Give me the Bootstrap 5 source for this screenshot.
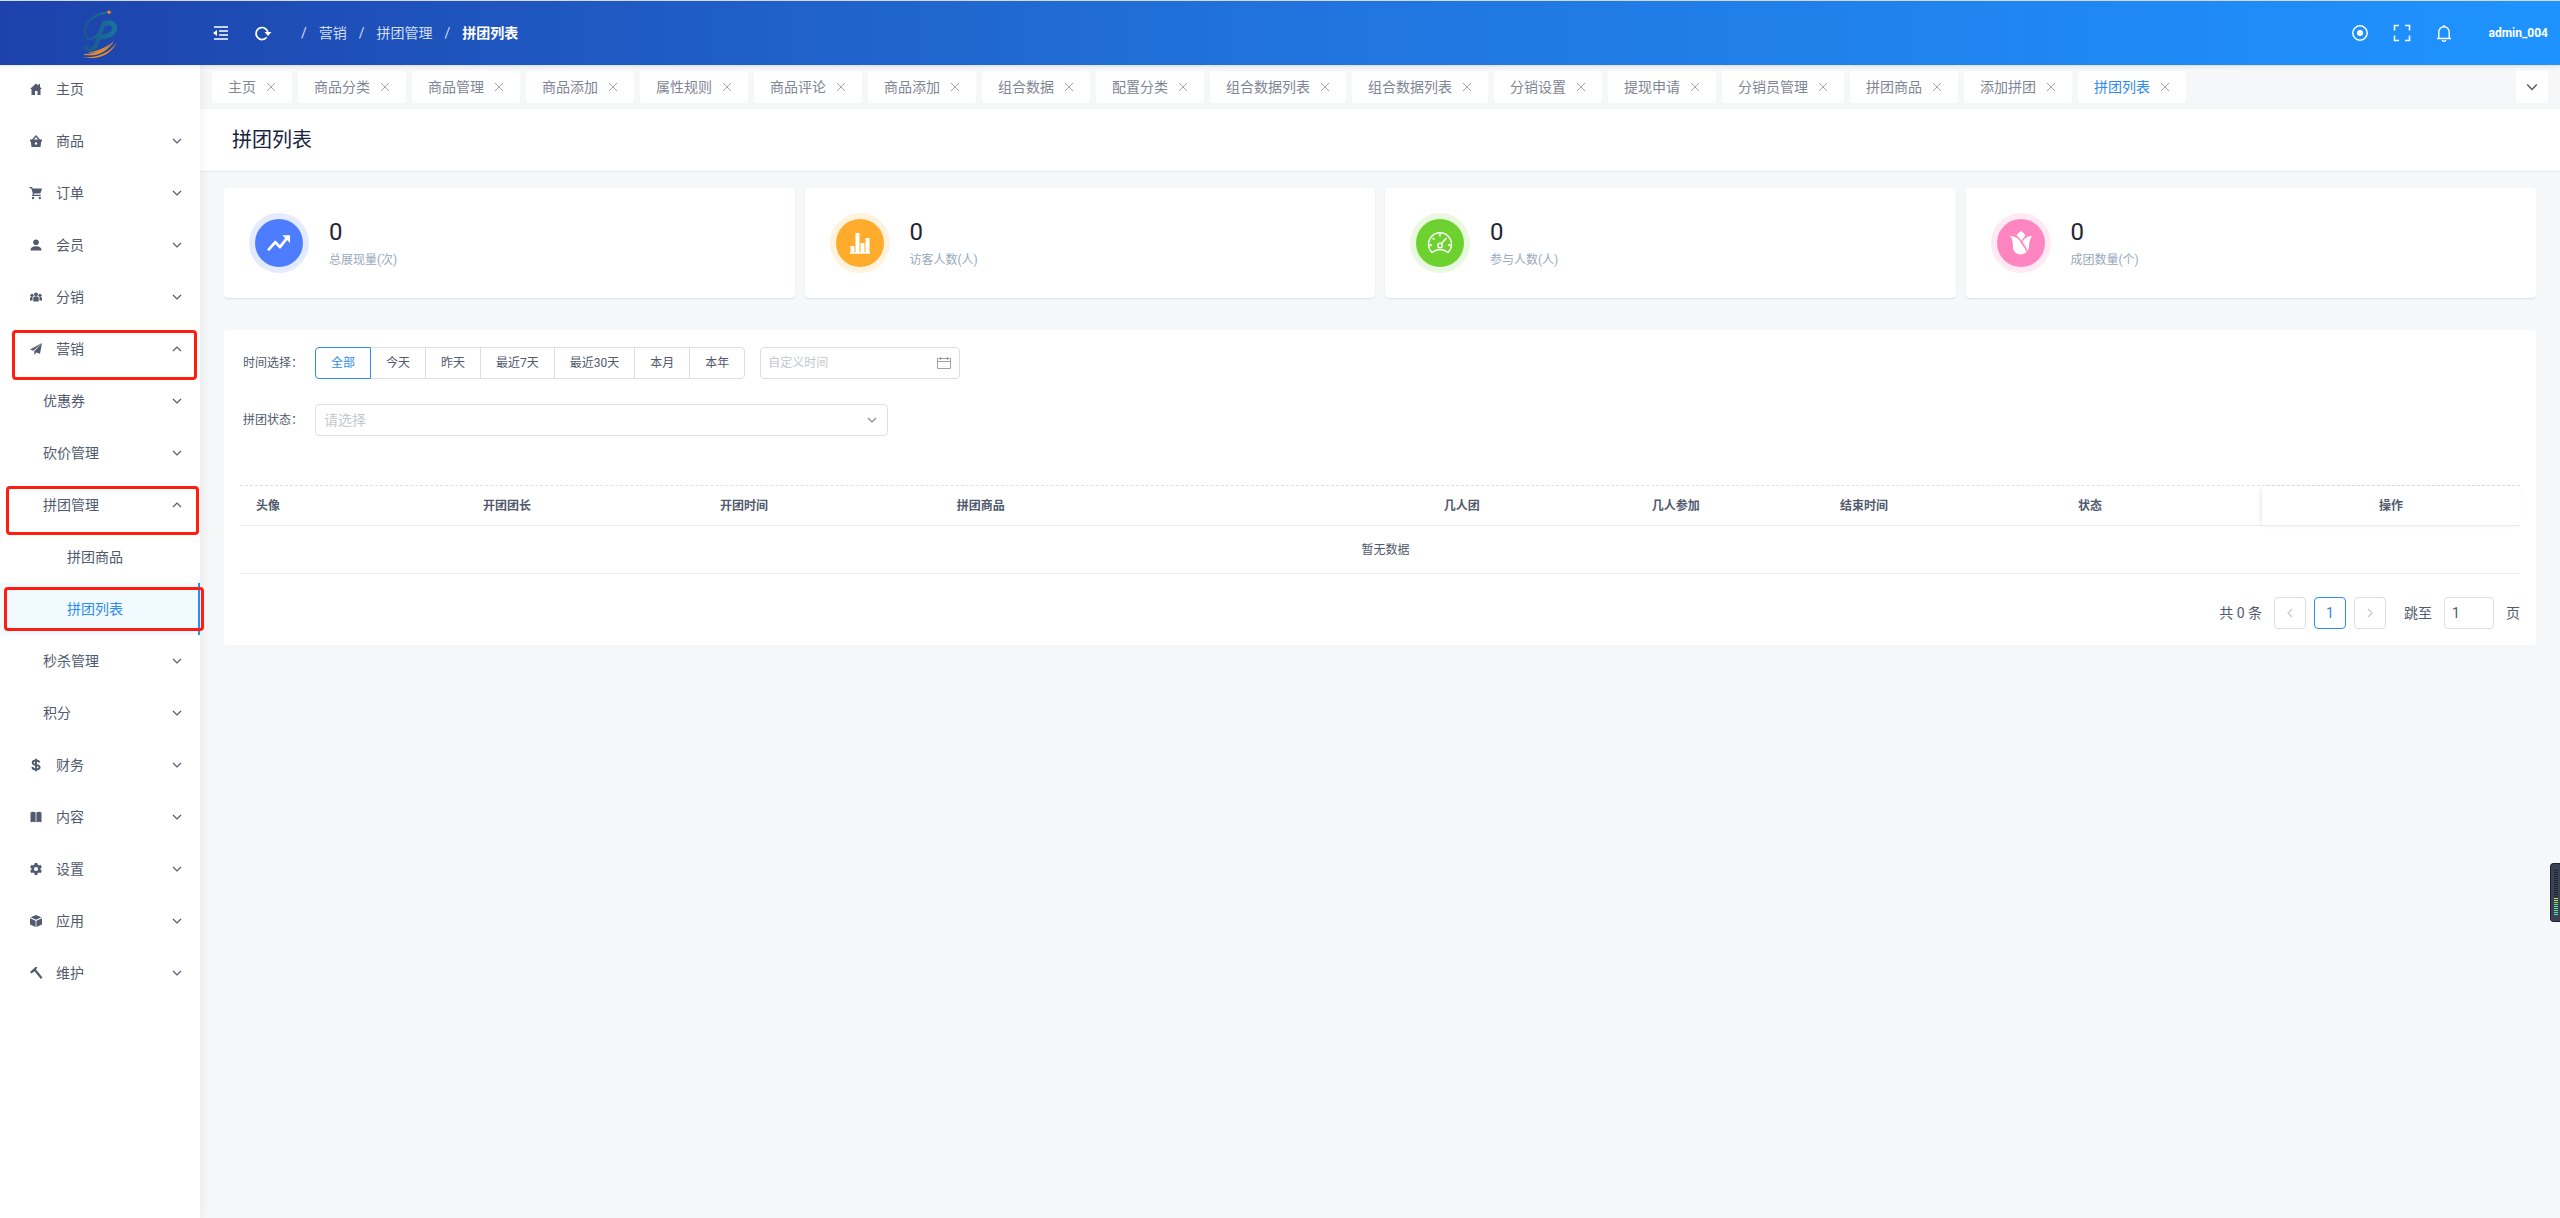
<!DOCTYPE html>
<html lang="zh-CN">
<head>
<meta charset="utf-8">
<meta name="viewport" content="width=device-width, initial-scale=1">
<title>拼团列表</title>
<link href="https://cdn.jsdelivr.net/npm/bootstrap@5.3.0/dist/css/bootstrap.min.css" rel="stylesheet">
<script src="https://cdn.jsdelivr.net/npm/bootstrap@5.3.0/dist/js/bootstrap.bundle.min.js" defer></script>
<style>
:root{--ink:#515a6e;--line:#dcdee2;--soft:#e8eaec;--blue:#2d8cf0}
body{font-family:Roboto,"Noto Sans CJK SC",sans-serif;font-size:14px;line-height:20px;color:var(--ink);background:#f5f7f9;min-height:100vh}
a{color:inherit;text-decoration:none}
svg{display:block;flex:none}
.topbar{height:65px;border-top:1px solid #d5d9de;background:linear-gradient(90deg,#1d42ab,#2173dc,#1e93ff);color:#fff;z-index:3;box-shadow:0 1px 4px rgba(0,21,41,.12);position:relative}
.brand{width:200px}
.icon-btn{background:none;border:0;padding:0;color:inherit;display:flex}
.crumbs{gap:12px;margin-left:29px}
.crumbs a,.crumbs span{color:#d3def3}
.crumbs .now{color:#fff;font-weight:700}
.tools{gap:24px;padding-right:12px}
.account{font-size:12px;font-weight:700;margin-left:12px}
.side{width:200px;flex:none;background:#fff;box-shadow:2px 0 8px rgba(29,35,41,.06);z-index:2}
.side ul{margin:0;padding:0;list-style:none}
.side .top-list{margin-top:-2px}
.item{display:flex;align-items:center;height:52px;padding:0 18px 0 28px;gap:12px;position:relative}
.item .chev{margin-left:auto}
.item.lvl2{padding-left:43px}
.item.lvl3{padding-left:67px}
.item.on{background:#f0faff;color:var(--blue);border-right:2px solid var(--blue)}
.frame{position:absolute;border:3px solid #ff1d10;border-radius:4px;z-index:4;pointer-events:none;inset:7px 3px -5px 12px}
.frame.wide{inset:7px 1px -4px 6px}
.frame.over{inset:4px -6px 4px 4px}
.main-col{min-width:0}
.tabs{padding:6px 12px;gap:6px}
.tab{height:32px;background:#fff;border-radius:3px;padding:0 16px;gap:10px;color:#808695;white-space:nowrap}
.tab.on{color:var(--blue)}
.tab .icon-btn{color:#a3a6ad}
.more{width:32px;height:32px;background:#fff;border-radius:2px;color:var(--ink)}
.page-head{background:#fff;border-bottom:1px solid var(--soft);height:63px;padding:0 32px}
.page-head h1{font-size:20px;line-height:28px;font-weight:400;color:#17233d;margin:0}
.body-pad{padding:16px 24px}
.stats{gap:10px}
.panel{background:#fff;border-radius:4px}
.stat{height:110px;box-shadow:0 1px 1px #dcdfe3;padding:0 25px;gap:20px}
.disc{width:60px;height:60px;border-radius:50%;padding:6px}
.disc div{width:48px;height:48px;border-radius:50%;color:#fff}
.disc.b{background:#e4ebff}.disc.b div{background:#4d7cfe}
.disc.o{background:#fff2df}.disc.o div{background:#ffab2b}
.disc.g{background:#e9f9e0}.disc.g div{background:#6dd230}
.disc.p{background:#ffeaf4}.disc.p div{background:#ff85c0}
.figure-num{font-size:24px;line-height:32px;color:#252631}
.figure-cap{font-size:12px;line-height:20px;color:#98a9bc;margin-top:2px}
.list{margin-top:32px;padding:17px 16px 16px;font-size:12px}
.lab{width:75px;padding-left:3px}
.seg input{position:absolute;opacity:0}
.seg label{height:32px;line-height:30px;padding:0 15px;border:1px solid var(--line);margin-left:-1px;cursor:pointer;position:relative}
.seg label:first-of-type{margin-left:0;border-radius:4px 0 0 4px}
.seg label:last-of-type{border-radius:0 4px 4px 0}
.seg input:checked+label{border-color:var(--blue);color:var(--blue);z-index:1}
.field{height:32px;border:1px solid var(--line);border-radius:4px;background:#fff;color:var(--ink);padding:0 7px}
.field::placeholder{color:#c5c8ce;opacity:1}
.date-box{width:200px;margin-left:15px}
.date-box input{width:100%}
.date-box svg{position:absolute;right:9px;top:9px;color:#9a9fab}
.state-row{margin-top:25px}
.state{width:573px;max-width:100%}
.state select{width:100%;appearance:none;color:#c5c8ce;font-size:14px;padding:0 8px}
.state svg{position:absolute;right:11px;top:11px;color:#808695}
.grid{table-layout:fixed;width:100%;margin-top:49px;border-top:1px dashed #dfe1e4;border-collapse:separate;border-spacing:0}
.grid th{height:40px;padding:0 16px;font-weight:700;border-bottom:1px solid var(--soft)}
.grid .fixed{text-align:center;box-shadow:-2px 0 6px -2px rgba(0,0,0,.14)}
.grid td{height:48px;text-align:center;padding-left:12px;border-bottom:1px solid var(--soft)}
.pager{margin-top:23px;font-size:14px;gap:8px}
.pg{width:32px;height:32px;border:1px solid var(--line);border-radius:4px;background:#fff;color:#c5c8ce;padding:0}
.pg.on{border-color:var(--blue);color:var(--blue)}
.pager label{margin-left:10px}
.jump{width:50px}
.meter{position:fixed;right:0;top:863px;width:10px;height:59px;background:#3c4254;border:1px solid #1c202c;border-right:0;border-radius:4px 0 0 4px;z-index:5;padding:6px 2px 6px 3px}
.meter div{height:100%;background:repeating-linear-gradient(#0000 0 1px,#3c4254 1px 2px),linear-gradient(#1f2430 0 62%,#b4e04c 62%,#62e08a 78%,#4fe3c4)}
</style>
</head>
<body class="d-flex flex-column">
<svg width="0" height="0" class="position-absolute" aria-hidden="true">
<symbol id="down" viewBox="0 0 10 10"><path d="M1 3l4 4 4-4" fill="none" stroke="currentColor" stroke-width="1.2"/></symbol>
<symbol id="up" viewBox="0 0 10 10"><path d="M1 7l4-4 4 4" fill="none" stroke="currentColor" stroke-width="1.2"/></symbol>
<symbol id="x" viewBox="0 0 10 10"><path d="M1 1l8 8M9 1l-8 8" fill="none" stroke="currentColor" stroke-width="1"/></symbol>
</svg>

<header class="topbar d-flex align-items-center">
<a href="#" class="brand d-flex justify-content-center" aria-label="首页">
<svg width="36" height="54" viewBox="0 0 36 54"><defs><linearGradient id="lg" x1="0" x2="36" y1="0" y2="0" gradientUnits="userSpaceOnUse"><stop offset="0" stop-color="#1b5590"/><stop offset="1" stop-color="#19769a"/></linearGradient></defs>
<g fill="none" stroke="url(#lg)" stroke-linecap="round"><path d="M23 7C11 9 2 17 3 26c1 8 6 8 10 5 3-2 5-5 8-8" stroke-width="2.600"/><path d="M22 17c-4 8-5 15-8 22-2 5-8 6-11 2" stroke-width="4"/><path d="M22 18c7-3 11 0 10.500 4.500C32 28 25 31 17 31.500" stroke-width="5"/></g>
<path d="M27 4l1 1.500 2 .5-2 1-1 1.500-1-1.500-2-1 2-.5z" fill="#f7931e"/><g fill="#f7931e"><path d="M1 51c14 3 27-1 34-15-7 11-19 16-34 15z"/><path d="M2 48.500c12 2 22-2 29-12.500-7 8-17 12-29 12.500z" stroke="#f7931e" stroke-width=".6"/><path d="M5 46.500c11 1 18-3 23-9-6 5-13 8-23 9z"/></g></svg></a>
<button type="button" class="icon-btn ms-2 ps-1" aria-label="收起菜单"><svg width="18" height="18" viewBox="0 0 18 18"><path d="M2 3h14M7 7h9M7 11h9M2 15h14" stroke="currentColor" stroke-width="1.6"/><path d="M1 9l4-3v6z" fill="currentColor"/></svg></button>
<button type="button" class="icon-btn ms-4" aria-label="刷新"><svg width="18" height="18" viewBox="0 0 18 18"><path d="M12.700 13.300A6 6 0 1 1 14 9" fill="none" stroke="currentColor" stroke-width="1.700"/><path d="M10.500 8H17.500L14 12z" fill="currentColor"/></svg></button>
<nav class="crumbs d-flex" aria-label="面包屑"><span>/</span><a href="#">营销</a><span>/</span><a href="#">拼团管理</a><span>/</span><a href="#" class="now">拼团列表</a></nav>
<div class="tools d-flex align-items-center ms-auto">
<button type="button" class="icon-btn" aria-label="定位"><svg width="18" height="18" viewBox="0 0 18 18"><circle cx="9" cy="9" r="7.200" fill="none" stroke="currentColor" stroke-width="1.500"/><circle cx="9" cy="9" r="3" fill="currentColor"/></svg></button>
<button type="button" class="icon-btn" aria-label="全屏"><svg width="18" height="18" viewBox="0 0 18 18"><path d="M1.500 6.500v-5H6M12 1.500h4.500v5M16.500 11.500v5H12M6 16.500H1.500v-5" fill="none" stroke="currentColor" stroke-width="1.600"/></svg></button>
<button type="button" class="icon-btn" aria-label="通知"><svg width="18" height="18" viewBox="0 0 18 18"><path d="M2 14.500h14M3.800 14.500V8a5.200 5.200 0 0 1 10.400 0v6.500M9 3V1M7.300 16a1.700 1.200 0 0 0 3.400 0" fill="none" stroke="currentColor" stroke-width="1.400"/></svg></button>
<a href="#" class="account">admin_004</a>
</div>
</header>

<div class="d-flex flex-grow-1">
<aside class="side">
<ul class="top-list">
<li><a href="#" class="item"><svg width="16" height="16" viewBox="0 0 16 16" fill="currentColor"><path d="M8 2.500L2 8h1.500v6H7v-4h2.500v4h3V8H14l-2-2V3h-1.500v1.700z"/></svg>主页</a></li>
<li><a href="#" class="item"><svg width="16" height="16" viewBox="0 0 16 16" fill="currentColor"><path d="M2 6.500h12v2h-.8L12.500 14h-9L2.800 8.500H2z"/><path d="M4.500 7L8 3l3.500 4" fill="none" stroke="currentColor" stroke-width="1.400"/><circle cx="8" cy="10.500" r="1.200" fill="#fff"/></svg>商品<svg class="chev" width="10" height="10"><use href="#down"/></svg></a></li>
<li><a href="#" class="item"><svg width="16" height="16" viewBox="0 0 16 16" fill="currentColor"><path d="M1.500 2h2.600l.5 1.500H14l-1.600 5H6l-.5 1.300h7.200v1.200H4l.8-2.800L3.200 3.200H1.500z"/><circle cx="5" cy="13" r="1.200"/><circle cx="11.800" cy="13" r="1.200"/></svg>订单<svg class="chev" width="10" height="10"><use href="#down"/></svg></a></li>
<li><a href="#" class="item"><svg width="16" height="16" viewBox="0 0 16 16" fill="currentColor"><circle cx="8" cy="5.200" r="2.800"/><path d="M2.500 13.500c0-3 2.500-4.300 5.500-4.300s5.500 1.300 5.500 4.300z"/></svg>会员<svg class="chev" width="10" height="10"><use href="#down"/></svg></a></li>
<li><a href="#" class="item"><svg width="16" height="16" viewBox="0 0 16 16" fill="currentColor"><circle cx="8" cy="5.300" r="1.900"/><path d="M5.300 12.500V9.500c0-1.500 1.200-2.200 2.700-2.200s2.700.7 2.700 2.200v3z"/><circle cx="4" cy="6.300" r="1.600"/><path d="M2 11.500V9.300C2 8.300 3 7.800 4.500 7.900V11.500z"/><circle cx="12" cy="6.300" r="1.600"/><path d="M14 11.500V9.300c0-1-1-1.500-2.500-1.400V11.500z"/></svg>分销<svg class="chev" width="10" height="10"><use href="#down"/></svg></a></li>
<li><a href="#" class="item"><svg width="16" height="16" viewBox="0 0 16 16" fill="currentColor"><path d="M14 2L2 8.500l3.300 1.200zM14 2L6.300 10.300V14l2-2.600 3.700 1.400z"/></svg>营销<svg class="chev" width="10" height="10"><use href="#up"/></svg><span class="frame"></span></a>
<ul>
<li><a href="#" class="item lvl2">优惠券<svg class="chev" width="10" height="10"><use href="#down"/></svg></a></li>
<li><a href="#" class="item lvl2">砍价管理<svg class="chev" width="10" height="10"><use href="#down"/></svg></a></li>
<li><a href="#" class="item lvl2">拼团管理<svg class="chev" width="10" height="10"><use href="#up"/></svg><span class="frame wide"></span></a>
<ul>
<li><a href="#" class="item lvl3">拼团商品</a></li>
<li><a href="#" class="item lvl3 on">拼团列表<span class="frame over"></span></a></li>
</ul></li>
<li><a href="#" class="item lvl2">秒杀管理<svg class="chev" width="10" height="10"><use href="#down"/></svg></a></li>
<li><a href="#" class="item lvl2">积分<svg class="chev" width="10" height="10"><use href="#down"/></svg></a></li>
</ul></li>
<li><a href="#" class="item"><svg width="16" height="16" viewBox="0 0 16 16" fill="none" stroke="currentColor" stroke-width="1.900"><path d="M11.500 5.500C11 4 9.700 3.500 8 3.500c-2 0-3.300.8-3.300 2.200C4.700 9 11.600 7 11.600 10.300c0 1.500-1.500 2.200-3.500 2.200-2.100 0-3.500-.8-3.800-2.500M8 1.800v12.400"/></svg>财务<svg class="chev" width="10" height="10"><use href="#down"/></svg></a></li>
<li><a href="#" class="item"><svg width="16" height="16" viewBox="0 0 16 16" fill="currentColor"><path d="M2.500 3.500C4 2.500 6 2.500 7.600 3.500v9.800c-1.600-.8-3.600-.8-5.100 0zM13.500 3.500c-1.500-1-3.500-1-5.100 0v9.800c1.600-.8 3.600-.8 5.100 0z"/></svg>内容<svg class="chev" width="10" height="10"><use href="#down"/></svg></a></li>
<li><a href="#" class="item"><svg width="16" height="16" viewBox="0 0 16 16" fill="none" stroke="currentColor"><circle cx="8" cy="8" r="3.400" stroke-width="2.600"/><path d="M8 2v2M8 12v2M2.800 5l1.700 1M11.500 10l1.700 1M2.800 11l1.700-1M11.500 6l1.700-1" stroke-width="2.800"/></svg>设置<svg class="chev" width="10" height="10"><use href="#down"/></svg></a></li>
<li><a href="#" class="item"><svg width="16" height="16" viewBox="0 0 16 16" fill="currentColor"><path d="M8 2l5.500 2.300L8 6.800 2.500 4.300zM2 5.200l5.600 2.500V14L2 11.500zM14 5.200L8.400 7.700V14L14 11.500z"/></svg>应用<svg class="chev" width="10" height="10"><use href="#down"/></svg></a></li>
<li><a href="#" class="item"><svg width="16" height="16" viewBox="0 0 16 16" fill="currentColor"><path d="M2 7l5.500-5h2L8 4.500 14.500 12.500 12.800 14 6.500 6.300 3.500 8.500z"/></svg>维护<svg class="chev" width="10" height="10"><use href="#down"/></svg></a></li>
</ul>
</aside>

<main class="main-col flex-grow-1">
<div class="tabs d-flex">
<div class="tab d-flex align-items-center"><a href="#">主页</a><button type="button" class="icon-btn" aria-label="关闭"><svg width="10" height="10"><use href="#x"/></svg></button></div>
<div class="tab d-flex align-items-center"><a href="#">商品分类</a><button type="button" class="icon-btn" aria-label="关闭"><svg width="10" height="10"><use href="#x"/></svg></button></div>
<div class="tab d-flex align-items-center"><a href="#">商品管理</a><button type="button" class="icon-btn" aria-label="关闭"><svg width="10" height="10"><use href="#x"/></svg></button></div>
<div class="tab d-flex align-items-center"><a href="#">商品添加</a><button type="button" class="icon-btn" aria-label="关闭"><svg width="10" height="10"><use href="#x"/></svg></button></div>
<div class="tab d-flex align-items-center"><a href="#">属性规则</a><button type="button" class="icon-btn" aria-label="关闭"><svg width="10" height="10"><use href="#x"/></svg></button></div>
<div class="tab d-flex align-items-center"><a href="#">商品评论</a><button type="button" class="icon-btn" aria-label="关闭"><svg width="10" height="10"><use href="#x"/></svg></button></div>
<div class="tab d-flex align-items-center"><a href="#">商品添加</a><button type="button" class="icon-btn" aria-label="关闭"><svg width="10" height="10"><use href="#x"/></svg></button></div>
<div class="tab d-flex align-items-center"><a href="#">组合数据</a><button type="button" class="icon-btn" aria-label="关闭"><svg width="10" height="10"><use href="#x"/></svg></button></div>
<div class="tab d-flex align-items-center"><a href="#">配置分类</a><button type="button" class="icon-btn" aria-label="关闭"><svg width="10" height="10"><use href="#x"/></svg></button></div>
<div class="tab d-flex align-items-center"><a href="#">组合数据列表</a><button type="button" class="icon-btn" aria-label="关闭"><svg width="10" height="10"><use href="#x"/></svg></button></div>
<div class="tab d-flex align-items-center"><a href="#">组合数据列表</a><button type="button" class="icon-btn" aria-label="关闭"><svg width="10" height="10"><use href="#x"/></svg></button></div>
<div class="tab d-flex align-items-center"><a href="#">分销设置</a><button type="button" class="icon-btn" aria-label="关闭"><svg width="10" height="10"><use href="#x"/></svg></button></div>
<div class="tab d-flex align-items-center"><a href="#">提现申请</a><button type="button" class="icon-btn" aria-label="关闭"><svg width="10" height="10"><use href="#x"/></svg></button></div>
<div class="tab d-flex align-items-center"><a href="#">分销员管理</a><button type="button" class="icon-btn" aria-label="关闭"><svg width="10" height="10"><use href="#x"/></svg></button></div>
<div class="tab d-flex align-items-center"><a href="#">拼团商品</a><button type="button" class="icon-btn" aria-label="关闭"><svg width="10" height="10"><use href="#x"/></svg></button></div>
<div class="tab d-flex align-items-center"><a href="#">添加拼团</a><button type="button" class="icon-btn" aria-label="关闭"><svg width="10" height="10"><use href="#x"/></svg></button></div>
<div class="tab on d-flex align-items-center"><a href="#">拼团列表</a><button type="button" class="icon-btn" aria-label="关闭"><svg width="10" height="10"><use href="#x"/></svg></button></div>
<button type="button" class="icon-btn more align-items-center justify-content-center ms-auto" aria-label="更多标签"><svg width="12" height="12"><use href="#down"/></svg></button>
</div>
<div class="page-head d-flex align-items-center"><h1>拼团列表</h1></div>

<div class="body-pad">
<div class="stats d-flex">
<div class="panel stat d-flex align-items-center flex-fill w-25"><div class="disc b"><div class="d-flex align-items-center justify-content-center"><svg width="24" height="24" viewBox="0 0 26 26"><path d="M2 20l7-8 5 5.500 7-9" fill="none" stroke="currentColor" stroke-width="3" stroke-linejoin="round" stroke-linecap="round"/><path d="M16.500 4.500H25V13z" fill="currentColor"/></svg></div></div><div><div class="figure-num">0</div><div class="figure-cap">总展现量(次)</div></div></div>
<div class="panel stat d-flex align-items-center flex-fill w-25"><div class="disc o"><div class="d-flex align-items-center justify-content-center"><svg width="24" height="24" viewBox="0 0 24 24"><path d="M4.500 22v-7M9.500 22V2M14.500 22V12M19.500 22V7" stroke="currentColor" stroke-width="4"/><path d="M2 22h20" stroke="currentColor" stroke-width="1.500"/></svg></div></div><div><div class="figure-num">0</div><div class="figure-cap">访客人数(人)</div></div></div>
<div class="panel stat d-flex align-items-center flex-fill w-25"><div class="disc g"><div class="d-flex align-items-center justify-content-center"><svg width="26" height="26" viewBox="0 0 26 26" fill="none" stroke="currentColor" stroke-width="1.400" stroke-linejoin="round"><path d="M5 22.500A11.500 11.500 0 1 1 21 22.500q-8-6-16 0z"/><circle cx="13" cy="15.500" r="2.300"/><path d="M14.500 13.500l5-5.500M13 3.500v3M5.500 8l2 1.500M2 15h3M21 15h3"/></svg></div></div><div><div class="figure-num">0</div><div class="figure-cap">参与人数(人)</div></div></div>
<div class="panel stat d-flex align-items-center flex-fill w-25"><div class="disc p"><div class="d-flex align-items-center justify-content-center"><svg width="26" height="26" viewBox="0 0 26 26"><path d="M13 1q3 2 4.500 4.500Q15 8 13.500 11 11 7 8.500 5.500 10 3 13 1zM2 6q8 0 11 7 4 5 5.500 9-3 3-7 2.500Q5 23 5 17 5 9 2 6zM24 6q-3 4-3 11 0 2-1.500 4-1-4-5-9Q17 6.500 24 6z" fill="currentColor"/></svg></div></div><div><div class="figure-num">0</div><div class="figure-cap">成团数量(个)</div></div></div>
</div>

<section class="panel list">
<div class="d-flex align-items-center">
<span class="lab">时间选择：</span>
<div class="seg d-flex" role="group" aria-label="时间选择">
<input type="radio" name="t" id="t1" checked><label for="t1">全部</label>
<input type="radio" name="t" id="t2"><label for="t2">今天</label>
<input type="radio" name="t" id="t3"><label for="t3">昨天</label>
<input type="radio" name="t" id="t4"><label for="t4">最近7天</label>
<input type="radio" name="t" id="t5"><label for="t5">最近30天</label>
<input type="radio" name="t" id="t6"><label for="t6">本月</label>
<input type="radio" name="t" id="t7"><label for="t7">本年</label>
</div>
<div class="date-box position-relative"><input class="field" type="text" placeholder="自定义时间" aria-label="自定义时间"><svg width="14" height="14" viewBox="0 0 14 14"><path d="M.5 2.500h13v10H.5zM.5 5.500h13M3.500 1v3M10.500 1v3" fill="none" stroke="currentColor" stroke-width="1"/></svg></div>
</div>
<div class="state-row d-flex align-items-center">
<label class="lab" for="st">拼团状态：</label>
<div class="state position-relative"><select id="st" class="field"><option>请选择</option></select><svg width="10" height="10"><use href="#down"/></svg></div>
</div>

<table class="grid">
<colgroup><col style="width:9.960%"><col style="width:10.390%"><col style="width:10.390%"><col style="width:21.360%"><col style="width:9.120%"><col style="width:8.250%"><col style="width:10.440%"><col style="width:8.770%"><col style="width:11.320%"></colgroup>
<thead><tr><th scope="col">头像</th><th scope="col">开团团长</th><th scope="col">开团时间</th><th scope="col">拼团商品</th><th scope="col">几人团</th><th scope="col">几人参加</th><th scope="col">结束时间</th><th scope="col">状态</th><th scope="col" class="fixed">操作</th></tr></thead>
<tbody><tr><td colspan="9">暂无数据</td></tr></tbody>
</table>

<div class="pager d-flex align-items-center justify-content-end">
<span class="me-1">共 0 条</span>
<button type="button" class="pg d-flex align-items-center justify-content-center" aria-label="上一页"><svg width="10" height="10" viewBox="0 0 10 10"><path d="M7 1L3 5l4 4" fill="none" stroke="currentColor" stroke-width="1.200"/></svg></button>
<button type="button" class="pg on">1</button>
<button type="button" class="pg d-flex align-items-center justify-content-center" aria-label="下一页"><svg width="10" height="10" viewBox="0 0 10 10"><path d="M3 1l4 4-4 4" fill="none" stroke="currentColor" stroke-width="1.200"/></svg></button>
<label for="pn" class="me-1">跳至</label><input id="pn" class="field jump" type="text" value="1"><span class="ms-1">页</span>
</div>
</section>
</div>
</main>
</div>
<div class="meter" aria-hidden="true"><div></div></div>
</body></html>
